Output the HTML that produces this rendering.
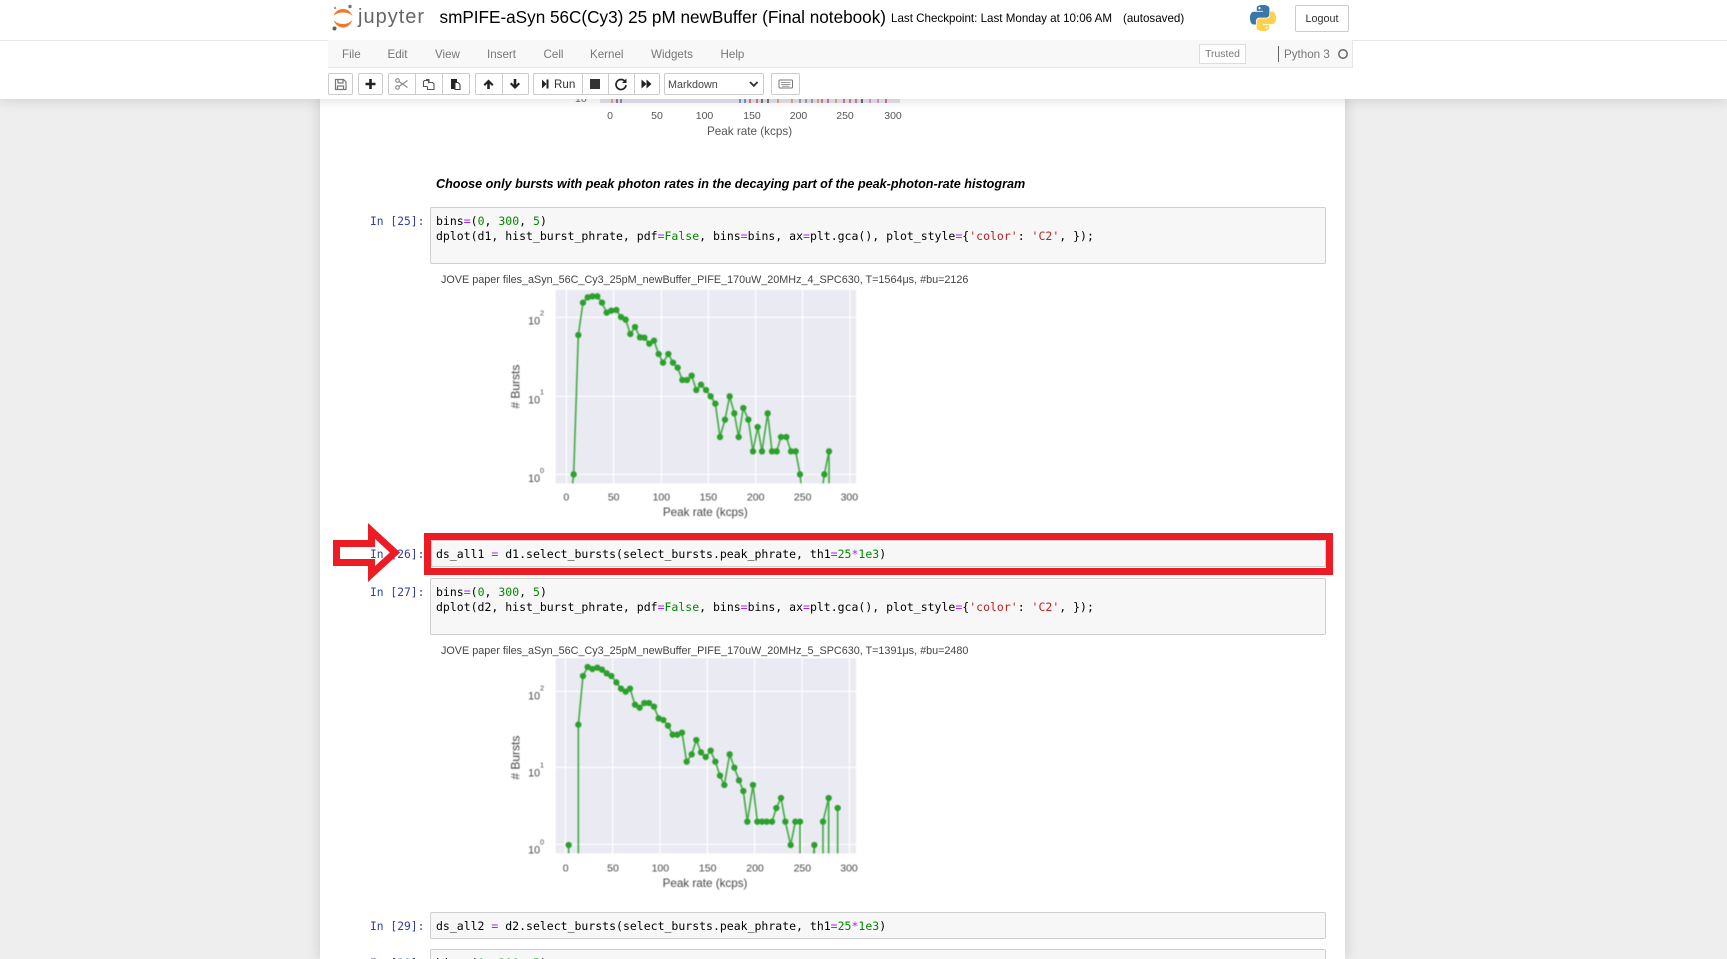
<!DOCTYPE html>
<html><head><meta charset="utf-8"><title>smPIFE-aSyn 56C(Cy3) 25 pM newBuffer</title>
<style>
html,body{margin:0;padding:0;width:1727px;height:959px;overflow:hidden;background:#eee;font-family:"Liberation Sans",sans-serif}
#page{position:relative;width:1727px;height:959px;overflow:hidden;background:#eee}
.a{position:absolute;white-space:nowrap}
#nb{position:absolute;left:320px;top:0;width:1025px;height:959px;background:#fff;box-shadow:0 0 12px 1px rgba(87,87,87,.2)}
#hd{position:absolute;left:0;top:0;width:1727px;height:99px;background:#fff;box-shadow:0 0 12px 1px rgba(87,87,87,.2);z-index:5}
#mb{position:absolute;left:328px;top:40px;width:1025px;background:#f8f8f8;border-bottom:1px solid #e7e7e7;border-right:1px solid #e7e7e7;box-sizing:border-box;height:28px}
#line{position:absolute;left:0;top:40px;width:1727px;height:1px;background:#e7e7e7}
.m{position:absolute;top:47.5px;font-size:11.6px;line-height:14px;color:#777}
.b{position:absolute;top:73px;height:22px;box-sizing:border-box;border:1px solid #ccc;background:#fff;border-radius:2px}
.code{position:absolute;background:#f7f7f7;border:1px solid #cfcfcf;border-radius:2px;box-sizing:border-box;left:430px;width:896px}
.c{position:absolute;left:436px;font:11.5px/15px "DejaVu Sans Mono","Liberation Mono",monospace;color:#000;white-space:pre}
.l{position:absolute;left:370px;font:11.3px/15px "DejaVu Sans Mono","Liberation Mono",monospace;color:#303f9f;white-space:pre}
.o{color:#a2f}.n{color:#080}.s{color:#ba2121}
.t{position:absolute;left:441px;font-size:10.8px;line-height:14px;color:#444;white-space:nowrap;filter:blur(.25px)}
svg{position:absolute;overflow:visible}
.pl text{font-family:"Liberation Sans",sans-serif;fill:#444}
.tk{position:absolute;top:109px;font-size:10.5px;line-height:14px;color:#555;transform:translateX(-50%)}
</style></head><body><div id="page">
<div id="nb"></div>

<!-- partially hidden plot above -->
<svg style="left:0;top:0" width="1727" height="110" viewBox="0 0 1727 110">
<rect x="600" y="99" width="300" height="4" fill="#e3e3ee"/>
<g fill="none" stroke-width="1.3">
<path stroke="#c98a55" d="M612 99v4"/><path stroke="#8a3a3a" d="M617 99v4"/><path stroke="#4a5a9a" d="M621 99v4"/>
<path stroke="#3a6aaa" d="M740 99v4M745 99v4"/><path stroke="#c04040" d="M750 99v4M757 99v4"/><path stroke="#333" d="M762 99v4M768 99v4"/>
<path stroke="#e08030" d="M792 99v4M778 99v4"/><path stroke="#777" d="M800 99v4M806 99v4M812 99v4"/><path stroke="#e08030" d="M818 99v4M836 99v4"/>
<path stroke="#c04060" d="M822 99v4M828 99v4M844 99v4M850 99v4M856 99v4"/><path stroke="#222" d="M862 99v4"/><path stroke="#d070b0" d="M870 99v4M878 99v4"/><path stroke="#d03040" d="M886 99v4"/>
</g>
<text x="575" y="102" font-family="Liberation Sans" font-size="10.5" fill="#666">10</text>
</svg>
<div class="tk" style="left:610px">0</div><div class="tk" style="left:657px">50</div><div class="tk" style="left:704.5px">100</div><div class="tk" style="left:752px">150</div><div class="tk" style="left:798.5px">200</div><div class="tk" style="left:845px">250</div><div class="tk" style="left:893px">300</div>
<div class="a" style="left:707px;top:125px;font-size:11.7px;line-height:14px;color:#555">Peak rate (kcps)</div>

<div class="a" style="left:436px;top:176px;font-size:12.6px;line-height:16px;font-weight:bold;font-style:italic;color:#000">Choose only bursts with peak photon rates in the decaying part of the peak-photon-rate histogram</div>

<!-- cell 25 -->
<div class="l" style="top:214px">In [25]:</div>
<div class="code" style="top:207px;height:57px"></div>
<div class="c" style="top:214px">bins<span class="o">=</span>(<span class="n">0</span>, <span class="n">300</span>, <span class="n">5</span>)
dplot(d1, hist_burst_phrate, pdf<span class="o">=</span><span class="n">False</span>, bins<span class="o">=</span>bins, ax<span class="o">=</span>plt.gca(), plot_style<span class="o">=</span>{<span class="s">'color'</span>: <span class="s">'C2'</span>, });</div>

<div class="t" style="top:272.5px">JOVE paper files_aSyn_56C_Cy3_25pM_newBuffer_PIFE_170uW_20MHz_4_SPC630, T=1564μs, #bu=2126</div>

<svg class="pl" style="left:490px;top:265px;filter:blur(.4px)" width="400" height="260" viewBox="0 0 1200 780">
<rect x="197" y="75" width="901" height="580" fill="#eaeaf2"/>
<path stroke="#fff" stroke-width="3.5" fill="none" d="M229 75V655M371 75V655M514 75V655M655 75V655M797 75V655M938 75V655M1080 75V655M197 157H1098M197 394H1098M197 628H1098"/>
<defs><clipPath id="c1"><rect x="197" y="75" width="901" height="580"/></clipPath>
<clipPath id="c2"><rect x="197" y="55" width="901" height="585"/></clipPath></defs>
<g clip-path="url(#c1)">
<polyline fill="none" stroke="#46ad46" stroke-width="5" points="246,670 251,628 265,210 279,113 293,97 307,94 322,94 336,113 350,143 364,137 379,135 393,156 407,164 421,207 435,186 450,217 463,218 478,236 492,227 506,267 519,293 535,267 549,293 563,308 577,345 591,345 605,332 619,375 633,359 648,375 662,394 676,416 690,516 705,464 719,394 733,445 746,516 760,429 775,464 789,559 803,486 816,559 833,445 846,559 860,559 873,516 889,516 903,559 917,559 930,628 935,670"/>
<polyline fill="none" stroke="#46ad46" stroke-width="5" points="997,670 1003,628 1017,559 1017,670"/>
<g fill="#2ca02c">
<circle cx="251" cy="628" r="9.5"/><circle cx="265" cy="210" r="9.5"/><circle cx="279" cy="113" r="9.5"/><circle cx="293" cy="97" r="9.5"/><circle cx="307" cy="94" r="9.5"/><circle cx="322" cy="94" r="9.5"/><circle cx="336" cy="113" r="9.5"/><circle cx="350" cy="143" r="9.5"/><circle cx="364" cy="137" r="9.5"/><circle cx="379" cy="135" r="9.5"/><circle cx="393" cy="156" r="9.5"/><circle cx="407" cy="164" r="9.5"/><circle cx="421" cy="207" r="9.5"/><circle cx="435" cy="186" r="9.5"/><circle cx="450" cy="217" r="9.5"/><circle cx="463" cy="218" r="9.5"/><circle cx="478" cy="236" r="9.5"/><circle cx="492" cy="227" r="9.5"/><circle cx="506" cy="267" r="9.5"/><circle cx="519" cy="293" r="9.5"/><circle cx="535" cy="267" r="9.5"/><circle cx="549" cy="293" r="9.5"/><circle cx="563" cy="308" r="9.5"/><circle cx="577" cy="345" r="9.5"/><circle cx="591" cy="345" r="9.5"/><circle cx="605" cy="332" r="9.5"/><circle cx="619" cy="375" r="9.5"/><circle cx="633" cy="359" r="9.5"/><circle cx="648" cy="375" r="9.5"/><circle cx="662" cy="394" r="9.5"/><circle cx="676" cy="416" r="9.5"/><circle cx="690" cy="516" r="9.5"/><circle cx="705" cy="464" r="9.5"/><circle cx="719" cy="394" r="9.5"/><circle cx="733" cy="445" r="9.5"/><circle cx="746" cy="516" r="9.5"/><circle cx="760" cy="429" r="9.5"/><circle cx="775" cy="464" r="9.5"/><circle cx="789" cy="559" r="9.5"/><circle cx="803" cy="486" r="9.5"/><circle cx="816" cy="559" r="9.5"/><circle cx="833" cy="445" r="9.5"/><circle cx="846" cy="559" r="9.5"/><circle cx="860" cy="559" r="9.5"/><circle cx="873" cy="516" r="9.5"/><circle cx="889" cy="516" r="9.5"/><circle cx="903" cy="559" r="9.5"/><circle cx="917" cy="559" r="9.5"/><circle cx="930" cy="628" r="9.5"/><circle cx="1003" cy="628" r="9.5"/><circle cx="1017" cy="559" r="9.5"/>
</g></g>
<g font-size="31.5" text-anchor="middle">
<text x="229" y="706">0</text><text x="371" y="706">50</text><text x="514" y="706">100</text><text x="655" y="706">150</text><text x="797" y="706">200</text><text x="938" y="706">250</text><text x="1078" y="706">300</text>
</g>
<g font-size="32" text-anchor="end"><text x="150" y="179">10</text><text x="150" y="416">10</text><text x="150" y="651">10</text></g>
<g font-size="22"><text x="150" y="152">2</text><text x="150" y="389">1</text><text x="150" y="624">0</text></g>
<text x="646" y="753" font-size="35" text-anchor="middle">Peak rate (kcps)</text>
<text transform="translate(89,365) rotate(-90)" font-size="36" text-anchor="middle"># Bursts</text>
</svg>

<!-- cell 26 -->
<div class="l" style="top:547px">In [26]:</div>
<div class="code" style="top:540px;height:27px;left:431px;width:895px"></div>
<div class="c" style="top:547px">ds_all1 <span class="o">=</span> d1.select_bursts(select_bursts.peak_phrate, th1<span class="o">=</span><span class="n">25</span><span class="o">*</span><span class="n">1e3</span>)</div>
<div class="a" style="left:424px;top:533px;width:909px;height:42px;box-sizing:border-box;border:7px solid #ed1c24"></div>
<svg style="left:0;top:0" width="1727" height="959" viewBox="0 0 1727 959">
<polygon points="336.5,543.5 371.5,543.5 371.5,531 395,552.5 371.5,574 371.5,562.5 336.5,562.5" fill="none" stroke="#ed1c24" stroke-width="7"/>
</svg>

<!-- cell 27 -->
<div class="l" style="top:585px">In [27]:</div>
<div class="code" style="top:578px;height:57px"></div>
<div class="c" style="top:585px">bins<span class="o">=</span>(<span class="n">0</span>, <span class="n">300</span>, <span class="n">5</span>)
dplot(d2, hist_burst_phrate, pdf<span class="o">=</span><span class="n">False</span>, bins<span class="o">=</span>bins, ax<span class="o">=</span>plt.gca(), plot_style<span class="o">=</span>{<span class="s">'color'</span>: <span class="s">'C2'</span>, });</div>

<div class="t" style="top:643.5px">JOVE paper files_aSyn_56C_Cy3_25pM_newBuffer_PIFE_170uW_20MHz_5_SPC630, T=1391μs, #bu=2480</div>

<svg class="pl" style="left:490px;top:640px;filter:blur(.4px)" width="400" height="260" viewBox="0 0 1200 780">
<rect x="197" y="55" width="901" height="585" fill="#eaeaf2"/>
<path stroke="#fff" stroke-width="3.5" fill="none" d="M226 55V640M368 55V640M510 55V640M652 55V640M794 55V640M936 55V640M1078 55V640M197 154H1098M197 382H1098M197 613H1098"/>
<g clip-path="url(#c2)">
<g fill="none" stroke="#46ad46" stroke-width="5">
<polyline points="236,615 236,650"/>
<polyline points="265,650 265,254 279,108 293,81 307,87 322,83 336,89 350,100 364,108 379,127 393,146 407,155 420,146 435,194 449,203 463,189 477,189 492,200 506,235 520,240 534,257 548,284 562,284 576,278 590,365 605,343 619,300 633,337 647,351 662,332 676,365 690,407 703,435 719,343 733,383 747,421 760,453 772,545 789,435 802,545 816,545 830,545 846,545 859,504 873,474 886,545 902,615 916,545 930,545 930,650"/>
<polyline points="970,650 973,615 973,650"/>
<polyline points="999,650 999,545 1016,474 1016,650"/>
<polyline points="1043,650 1043,504"/>
</g>
<g fill="#2ca02c">
<circle cx="236" cy="615" r="9.5"/><circle cx="265" cy="254" r="9.5"/><circle cx="279" cy="108" r="9.5"/><circle cx="293" cy="81" r="9.5"/><circle cx="307" cy="87" r="9.5"/><circle cx="322" cy="83" r="9.5"/><circle cx="336" cy="89" r="9.5"/><circle cx="350" cy="100" r="9.5"/><circle cx="364" cy="108" r="9.5"/><circle cx="379" cy="127" r="9.5"/><circle cx="393" cy="146" r="9.5"/><circle cx="407" cy="155" r="9.5"/><circle cx="420" cy="146" r="9.5"/><circle cx="435" cy="194" r="9.5"/><circle cx="449" cy="203" r="9.5"/><circle cx="463" cy="189" r="9.5"/><circle cx="477" cy="189" r="9.5"/><circle cx="492" cy="200" r="9.5"/><circle cx="506" cy="235" r="9.5"/><circle cx="520" cy="240" r="9.5"/><circle cx="534" cy="257" r="9.5"/><circle cx="548" cy="284" r="9.5"/><circle cx="562" cy="284" r="9.5"/><circle cx="576" cy="278" r="9.5"/><circle cx="590" cy="365" r="9.5"/><circle cx="605" cy="343" r="9.5"/><circle cx="619" cy="300" r="9.5"/><circle cx="633" cy="337" r="9.5"/><circle cx="647" cy="351" r="9.5"/><circle cx="662" cy="332" r="9.5"/><circle cx="676" cy="365" r="9.5"/><circle cx="690" cy="407" r="9.5"/><circle cx="703" cy="435" r="9.5"/><circle cx="719" cy="343" r="9.5"/><circle cx="733" cy="383" r="9.5"/><circle cx="747" cy="421" r="9.5"/><circle cx="760" cy="453" r="9.5"/><circle cx="772" cy="545" r="9.5"/><circle cx="789" cy="435" r="9.5"/><circle cx="802" cy="545" r="9.5"/><circle cx="816" cy="545" r="9.5"/><circle cx="830" cy="545" r="9.5"/><circle cx="846" cy="545" r="9.5"/><circle cx="859" cy="504" r="9.5"/><circle cx="873" cy="474" r="9.5"/><circle cx="886" cy="545" r="9.5"/><circle cx="902" cy="615" r="9.5"/><circle cx="916" cy="545" r="9.5"/><circle cx="930" cy="545" r="9.5"/><circle cx="973" cy="615" r="9.5"/><circle cx="999" cy="545" r="9.5"/><circle cx="1016" cy="474" r="9.5"/><circle cx="1043" cy="504" r="9.5"/>
</g></g>
<g font-size="31.5" text-anchor="middle">
<text x="227" y="695">0</text><text x="369" y="695">50</text><text x="511" y="695">100</text><text x="653" y="695">150</text><text x="795" y="695">200</text><text x="937" y="695">250</text><text x="1077" y="695">300</text>
</g>
<g font-size="32" text-anchor="end"><text x="150" y="179">10</text><text x="150" y="410">10</text><text x="150" y="640">10</text></g>
<g font-size="22"><text x="150" y="152">2</text><text x="150" y="383">1</text><text x="150" y="613">0</text></g>
<text x="645" y="741" font-size="35" text-anchor="middle">Peak rate (kcps)</text>
<text transform="translate(89,353) rotate(-90)" font-size="36" text-anchor="middle"># Bursts</text>
</svg>

<!-- cell 29 -->
<div class="l" style="top:919px">In [29]:</div>
<div class="code" style="top:912px;height:27px"></div>
<div class="c" style="top:919px">ds_all2 <span class="o">=</span> d2.select_bursts(select_bursts.peak_phrate, th1<span class="o">=</span><span class="n">25</span><span class="o">*</span><span class="n">1e3</span>)</div>

<div class="l" style="top:956px">In [30]:</div>
<div class="code" style="top:949px;height:57px"></div>
<div class="c" style="top:956px">bins<span class="o">=</span>(<span class="n">0</span>, <span class="n">300</span>, <span class="n">5</span>)</div>

<!-- header -->
<div id="hd"></div>
<div style="position:absolute;left:0;top:0;width:1727px;height:99px;z-index:6">
<div id="line"></div>
<div id="mb"></div>
<svg style="left:331px;top:4px" width="24" height="28" viewBox="0 0 24 28">
<path d="M2.5 12C4.5 7 8 5 12 5s7.5 2 9.5 7C19 9.500 16 8.500 12 8.500S5 9.500 2.500 12z" fill="#f37726"/>
<path d="M2.5 16C4.5 21 8 23.500 12 23.500s7.500-2.500 9.500-7.500C19 18.500 16 20 12 20S5 18.500 2.500 16z" fill="#f37726"/>
<circle cx="19" cy="2.500" r="1.700" fill="#767677"/><circle cx="3.500" cy="24.500" r="2" fill="#616262"/><circle cx="4" cy="4" r="1.200" fill="#9e9e9e"/>
</svg>
<div class="a" style="left:358px;top:3.5px;font-size:20px;letter-spacing:1px;line-height:26px;color:#666">jupyter</div>
<div class="a" style="left:439.5px;top:6.5px;font-size:17.15px;line-height:21px;color:#000">smPIFE-aSyn 56C(Cy3) 25 pM newBuffer (Final notebook)</div>
<div class="a" style="left:891px;top:11.5px;font-size:11.6px;line-height:14px;color:#000">Last Checkpoint: Last Monday at 10:06 AM</div>
<div class="a" style="left:1123px;top:11.5px;font-size:11.6px;line-height:14px;color:#000">(autosaved)</div>
<svg style="left:1250px;top:5px" width="26" height="26" viewBox="0 0 110 110">
<path fill="#3a76a8" d="M54.900 0C26.900 0 28.600 12.200 28.600 12.200l0 12.600h26.700v3.800H18C18 28.600 0 26.600 0 55c0 28.400 15.700 27.400 15.700 27.400h9.400V69.200s-.5-15.700 15.400-15.700h26.600s14.900.2 14.900-14.400V14.900S84.300 0 54.900 0zM40.200 8.500a4.800 4.800 0 1 1 0 9.600 4.800 4.800 0 0 1 0-9.600z"/>
<path fill="#fdd24c" transform="rotate(180 55 55)" d="M54.900 0C26.900 0 28.600 12.200 28.600 12.200l0 12.600h26.700v3.800H18C18 28.600 0 26.600 0 55c0 28.400 15.700 27.400 15.700 27.400h9.400V69.200s-.5-15.700 15.400-15.700h26.600s14.900.2 14.900-14.400V14.900S84.300 0 54.900 0zM40.200 8.500a4.800 4.800 0 1 1 0 9.600 4.800 4.800 0 0 1 0-9.600z"/>
</svg>
<div class="a" style="left:1295px;top:5px;width:54px;height:27px;box-sizing:border-box;border:1px solid #ccc;border-radius:2px;text-align:center;font-size:10.8px;line-height:26px;color:#333">Logout</div>

<div class="m" style="left:342px">File</div><div class="m" style="left:387.5px">Edit</div><div class="m" style="left:435px">View</div><div class="m" style="left:487px">Insert</div><div class="m" style="left:543.5px">Cell</div><div class="m" style="left:590px">Kernel</div><div class="m" style="left:651px">Widgets</div><div class="m" style="left:720.5px">Help</div>

<div class="a" style="left:1199px;top:44px;width:47px;height:20px;box-sizing:border-box;border:1px solid #ddd;background:#fff;text-align:center;font-size:10.4px;line-height:20px;color:#777">Trusted</div>
<div class="a" style="left:1278px;top:46px;width:1px;height:16px;background:#666"></div>
<div class="m" style="left:1284px">Python 3</div>
<svg style="left:1337px;top:48px" width="12" height="12"><circle cx="6" cy="6" r="4.2" fill="none" stroke="#666" stroke-width="1.5"/></svg>

<!-- toolbar -->
<div class="b" style="left:328px;width:25px"></div>
<div class="b" style="left:358px;width:25px"></div>
<div class="b" style="left:388px;width:28px;border-radius:2px 0 0 2px"></div><div class="b" style="left:415px;width:28px;border-radius:0"></div><div class="b" style="left:442px;width:28px;border-radius:0 2px 2px 0"></div>
<div class="b" style="left:475px;width:28px;border-radius:2px 0 0 2px"></div><div class="b" style="left:502px;width:27px;border-radius:0 2px 2px 0"></div>
<div class="b" style="left:533px;width:50px;border-radius:2px 0 0 2px"></div><div class="b" style="left:582px;width:27px;border-radius:0"></div><div class="b" style="left:608px;width:27px;border-radius:0"></div><div class="b" style="left:634px;width:26px;border-radius:0 2px 2px 0"></div>
<div class="b" style="left:664px;width:100px"></div>
<div class="b" style="left:771px;width:29px"></div>

<svg style="left:0;top:0" width="900" height="99" viewBox="0 0 900 99">
<!-- save -->
<path d="M335.5 79.500h8l2.500 2.500v7.500h-10.500z M338 79.500v3.500h5v-3.500 M337.500 89.500v-3.500h6v3.500" fill="none" stroke="#777" stroke-width="1.200"/>
<!-- plus -->
<path d="M370.500 79v10M365.500 84h10" stroke="#222" stroke-width="2.600" fill="none"/>
<!-- scissors -->
<g fill="none" stroke="#888" stroke-width="1.100"><circle cx="397.500" cy="80.500" r="1.800"/><circle cx="397.500" cy="87.500" r="1.800"/><path d="M399 81.500L407.500 87.500M399 86.500L407.500 80.500"/></g>
<!-- copy -->
<g fill="none" stroke="#555" stroke-width="1.100"><path d="M424.500 80.500h4v6h-5v-5z"/><path d="M428.500 82.500h4l1.500 1.500v5.500h-6.500v-3" fill="#fff"/><path d="M426 79.500h3v3"/></g>
<!-- paste -->
<path d="M451 79h6v3h-2.500v7h-3.500z" fill="#222"/><path d="M455 82.500h3l2 2v5h-5z" fill="#fff" stroke="#333" stroke-width="1"/>
<!-- up/down -->
<path d="M488.500 79.500l-5 5 1.500 1.500 2.200-2.200V89h2.600v-5.200l2.200 2.200 1.500-1.500z" fill="#222"/>
<path d="M515 89l-5-5 1.500-1.500 2.200 2.200V79h2.600v5.700l2.200-2.200 1.500 1.500z" fill="#222"/>
<!-- run -->
<path d="M542 79.500l4.500 4.500-4.500 4.500z M546.500 79.500h2v9h-2z" fill="#222"/>
<!-- stop -->
<rect x="590" y="79" width="10" height="10" fill="#333"/>
<!-- restart -->
<path d="M625 81.500A5 5 0 1 0 626 85" fill="none" stroke="#222" stroke-width="1.700"/><path d="M626.500 78.500v4.500h-4.500z" fill="#222"/>
<!-- fast forward -->
<path d="M641.500 79.500l5 4.500-5 4.500z M646.500 79.500l5 4.500-5 4.500z" fill="#222"/>
<!-- chevron -->
<path d="M750 82l3.800 3.800 3.800-3.800" fill="none" stroke="#333" stroke-width="1.800"/>
<!-- keyboard -->
<rect x="779" y="80" width="13.500" height="8" rx="1" fill="#fff" stroke="#777" stroke-width="1"/><path d="M781 82.500h9.500M781 84.500h9.500M782 86.300h7.500" stroke="#999" stroke-width="1" fill="none"/>
</svg>
<div class="a" style="left:554px;top:77.5px;font-size:11.6px;line-height:14px;color:#333">Run</div>
<div class="a" style="left:668px;top:78.5px;font-size:10.8px;line-height:13px;color:#444">Markdown</div>
</div>
</div></body></html>
